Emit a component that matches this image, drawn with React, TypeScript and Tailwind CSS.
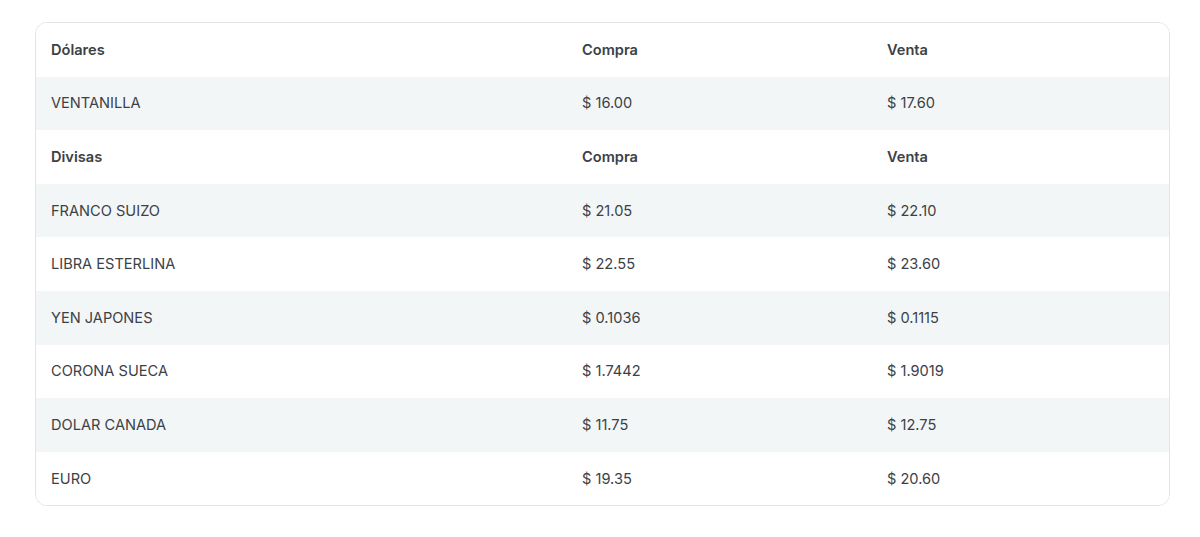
import React from "react";

type Row = { name: string; compra: string; venta: string; header?: boolean };

const rows: Row[] = [
  { name: "Dólares", compra: "Compra", venta: "Venta", header: true },
  { name: "VENTANILLA", compra: "$ 16.00", venta: "$ 17.60" },
  { name: "Divisas", compra: "Compra", venta: "Venta", header: true },
  { name: "FRANCO SUIZO", compra: "$ 21.05", venta: "$ 22.10" },
  { name: "LIBRA ESTERLINA", compra: "$ 22.55", venta: "$ 23.60" },
  { name: "YEN JAPONES", compra: "$ 0.1036", venta: "$ 0.1115" },
  { name: "CORONA SUECA", compra: "$ 1.7442", venta: "$ 1.9019" },
  { name: "DOLAR CANADA", compra: "$ 11.75", venta: "$ 12.75" },
  { name: "EURO", compra: "$ 19.35", venta: "$ 20.60" },
];

export default function App() {
  return (
    <div
      className="w-[1200px] h-[537px] bg-white pt-[22px] pl-[35px]"
      style={{ fontFamily: "Inter, 'Noto Sans', sans-serif" }}
    >
      <div className="w-[1135px] border border-[#e2e4e6] rounded-[12px] overflow-hidden bg-white">
        {rows.map((r, i) => (
          <div
            key={i}
            className={`grid grid-cols-[531px_305px_1fr] items-center h-[53.6px] pt-[2px] text-[14.6px] text-[#3c4146] ${
              i % 2 === 1 ? "bg-[#f3f6f7]" : "bg-white"
            } ${r.header ? "font-semibold text-[#2f3438]" : ""}`}
          >
            <div className="pl-[15px]">{r.name}</div>
            <div className="pl-[15px]">{r.compra}</div>
            <div className="pl-[15px]">{r.venta}</div>
          </div>
        ))}
      </div>
    </div>
  );
}
